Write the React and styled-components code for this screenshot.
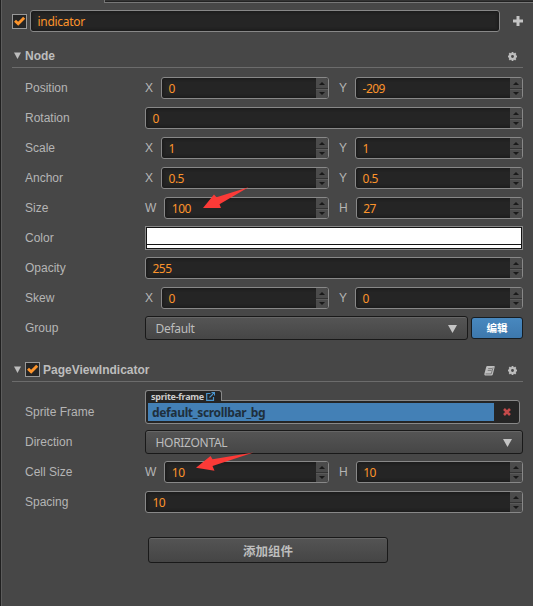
import React from "react";
import styled, { createGlobalStyle, css } from "styled-components";

const GlobalStyle = createGlobalStyle`
  * { box-sizing: border-box; }
  body { margin: 0; background: #474747; overflow: hidden; }
`;

const valueFont = css`
  font-family: "Noto Sans", "Noto Sans CJK SC", sans-serif;
  font-size: 12px;
`;

const Panel = styled.main`
  position: relative;
  width: 533px;
  height: 606px;
  background: #474747;
  border-left: 1px solid #202020;
  box-shadow: inset 1px 0 #5c5c5c;
  color: #b5b5b5;
  font: 12px "Liberation Sans", Arial, sans-serif;
`;

const TabStrip = styled.div`
  height: 3px;
  margin-left: 103px;
  background: #333;
  border-left: 1px solid #777;
  border-bottom: 1px solid #777;
  box-shadow: inset 0 -1px #222;
`;

const NameBar = styled.header`
  display: flex;
  align-items: center;
  height: 22px;
  margin: 7px 10px 0 11px;
`;

const CheckFrame = styled.span`
  display: flex;
  flex: none;
  width: 15px;
  height: 15px;
  margin-right: 3px;
  border: 1px solid #999;
  background: #252525;
`;

const Field = styled.div`
  display: flex;
  flex: 1;
  min-width: 0;
  height: 22px;
  border: 1px solid #888;
  border-radius: 3px;
  background: #252525;
  box-shadow: inset 0 0 3px 1px #191919;
  color: #fd942b;
  overflow: hidden;
`;

const Value = styled.span`
  ${valueFont}
  flex: 1;
  padding-left: 6.5px;
  line-height: 22px;
  letter-spacing: ${(p) => p.$tracking || "-0.5px"};
`;

const Steps = styled.span`
  display: flex;
  flex-direction: column;
  width: 12px;
  background: #4b4b4b;
`;

const Step = styled.span`
  display: flex;
  align-items: center;
  justify-content: center;
  height: 10px;
  & + & {
    border-top: 1px solid #333;
    box-shadow: inset 0 1px #5a5a5a;
  }
`;

const AddButton = styled.span`
  display: flex;
  margin-left: 13px;
`;

const SectionHead = styled.h2`
  display: flex;
  align-items: center;
  height: 24px;
  margin: ${(p) => p.$top}px 10px ${(p) => p.$bottom}px 11px;
  padding: 0 6px 0 2px;
  border-bottom: 1px solid #6c6c6c;
  font-size: 12px;
  font-weight: bold;
  color: #bdbdbd;
`;

const HeadTitle = styled.span`
  flex: 1;
`;

const HeadIcons = styled.span`
  display: flex;
  gap: 13px;
  padding-top: 2px;
`;

const Fold = styled.svg`
  width: 7px;
  height: 7px;
  margin-right: 4px;
`;

const Rows = styled.div`
  display: flex;
  flex-direction: column;
  gap: 8px;
  padding: 0 10px 0 24px;
  width: 532px;
`;

const Row = styled.div`
  display: flex;
  align-items: center;
  height: 22px;
`;

const Label = styled.span`
  flex: none;
  width: 120px;
`;

const Content = styled.div`
  display: flex;
  align-items: center;
  flex: none;
  gap: ${(p) => p.$gap || 0}px;
  width: 378px;
`;

const Axis = styled.div`
  display: flex;
  align-items: center;
  flex: 1;
  gap: 8px;
`;

const Swatch = styled.div`
  flex: 1;
  height: 24px;
  border: 1px solid #888;
  padding: 1px;
  background: #141414;
  display: flex;
  flex-direction: column;
  gap: 1px;
`;

const SwatchFill = styled.span`
  height: ${(p) => p.$h}px;
  background: #fff;
`;

const Select = styled.div`
  ${valueFont}
  display: flex;
  align-items: center;
  justify-content: space-between;
  flex: 1;
  height: 24px;
  padding: 1px 10px 0 9.5px;
  border: 1px solid #191919;
  border-radius: 3px;
  background: linear-gradient(#555, #464646);
  box-shadow: inset 0 1px #666;
  color: #bdbdbd;
  letter-spacing: -0.3px;
`;

const EditButton = styled.button`
  width: 52px;
  height: 22px;
  padding: 0;
  border: 1px solid #171d22;
  border-radius: 3px;
  background: linear-gradient(#4888bf, #3d78ad);
  color: #fff;
  font: bold 10.5px "Noto Sans CJK SC", sans-serif;
  line-height: 18px;
`;

const AssetSlot = styled.div`
  display: flex;
  flex-direction: column;
  width: 375px;
  height: 34px;
  margin-top: -10px;
`;

const AssetTab = styled.div`
  ${valueFont}
  position: relative;
  display: flex;
  align-items: center;
  gap: 2px;
  width: 77px;
  height: 11px;
  padding-left: 5px;
  border: 1px solid #888;
  border-bottom: 0;
  border-radius: 3px 3px 0 0;
  background: #252525;
  color: #ccc;
  font-size: 9px;
  font-weight: bold;
  letter-spacing: -0.25px;
`;

const AssetBox = styled.div`
  display: flex;
  height: 24px;
  margin-top: -1px;
  padding: 2px;
  border: 1px solid #888;
  border-radius: 0 3px 3px 3px;
  background: #252525;
`;

const AssetName = styled.span`
  ${valueFont}
  width: 346px;
  height: 18px;
  padding-left: 4px;
  background: #4380b6;
  color: #1e2f3d;
  font-weight: bold;
  line-height: 19px;
  letter-spacing: -0.35px;
`;

const ClearIcon = styled.span`
  display: flex;
  flex: 1;
  align-items: center;
  justify-content: center;
  padding-left: 2px;
`;

const AddComponent = styled.button`
  display: block;
  width: 240px;
  height: 26px;
  margin: 24px 0 0 147px;
  padding: 0;
  border: 1px solid #191919;
  border-radius: 3px;
  background: linear-gradient(#545454, #454545);
  box-shadow: inset 0 1px #666;
  color: #bdbdbd;
  font: bold 12.5px "Noto Sans CJK SC", sans-serif;
`;

const Pointers = styled.svg`
  position: absolute;
  top: 0;
  left: -1px;
  width: 533px;
  height: 606px;
  pointer-events: none;
`;

const Check = () => (
  <CheckFrame>
    <svg width="13" height="13" viewBox="0 0 13 13">
      <path d="M2 5.8 5.2 8.8 11.2 2.7" fill="none" stroke="#fd942b" strokeWidth="2.9" />
    </svg>
  </CheckFrame>
);

const Gear = () => (
  <svg width="9" height="9" viewBox="0 0 10 10">
    <g stroke="#bdbdbd" fill="none">
      <path d="M5 0v10M0 5h10M1.4 1.4l7.2 7.2M8.6 1.4L1.4 8.6" strokeWidth="2" />
      <circle cx="5" cy="5" r="2.8" strokeWidth="2.4" fill="#474747" />
    </g>
  </svg>
);

const Book = () => (
  <svg width="11" height="10" viewBox="0 0 11 10">
    <path d="M3.3 0H10q1 0 .7 1L8.8 8.5Q8.5 9.5 7.5 9.5H1.2Q0 9.2.4 7.8L2.2.9Q2.4 0 3.3 0Z" fill="#bdbdbd" />
    <path d="M4.2 2.6h3.8M3.7 4.4h3.8M1.6 7.9h5.6l1.9-6.4" fill="none" stroke="#5c5c5c" strokeWidth=".7" />
  </svg>
);

const Down = () => (
  <svg width="9" height="8" viewBox="0 0 8 7">
    <path d="M0 0h8L4 7z" fill="#c4c4c4" />
  </svg>
);

const Num = ({ children }) => (
  <Field>
    <Value>{children}</Value>
    <Steps>
      <Step>
        <svg width="6" height="3"><path d="M0 3 3 0 6 3z" fill="#191919" /></svg>
      </Step>
      <Step>
        <svg width="6" height="3"><path d="M0 0h6L3 3z" fill="#191919" /></svg>
      </Step>
    </Steps>
  </Field>
);

const Prop = ({ label, gap, children }) => (
  <Row>
    <Label>{label}</Label>
    <Content $gap={gap}>{children}</Content>
  </Row>
);

const Pair = ({ label, names = ["X", "Y"], values }) => (
  <Prop label={label} gap={10}>
    {names.map((n, i) => (
      <Axis key={n}>{n}<Num>{values[i]}</Num></Axis>
    ))}
  </Prop>
);

const FoldArrow = () => (
  <Fold viewBox="0 0 7 7"><path d="M0 .5h7L3.5 7z" fill="#bdbdbd" /></Fold>
);

export default function App() {
  return (
    <>
      <GlobalStyle />
      <Panel>
        <TabStrip />
        <NameBar>
          <Check />
          <Field><Value $tracking="-0.3px">indicator</Value></Field>
          <AddButton>
            <svg width="10" height="10"><path d="M5 0v10M0 5h10" stroke="#c4c4c4" strokeWidth="3" /></svg>
          </AddButton>
        </NameBar>

        <SectionHead $top={12} $bottom={9}>
          <FoldArrow />
          <HeadTitle>Node</HeadTitle>
          <HeadIcons><Gear /></HeadIcons>
        </SectionHead>
        <Rows>
          <Pair label="Position" values={["0", "-209"]} />
          <Prop label="Rotation"><Num>0</Num></Prop>
          <Pair label="Scale" values={["1", "1"]} />
          <Pair label="Anchor" values={["0.5", "0.5"]} />
          <Pair label="Size" names={["W", "H"]} values={["100", "27"]} />
          <Prop label="Color">
            <Swatch><SwatchFill $h={16} /><SwatchFill $h={3} /></Swatch>
          </Prop>
          <Prop label="Opacity"><Num>255</Num></Prop>
          <Pair label="Skew" values={["0", "0"]} />
          <Prop label="Group" gap={3}>
            <Select>Default<Down /></Select>
            <EditButton>编辑</EditButton>
          </Prop>
        </Rows>

        <SectionHead $top={19} $bottom={19}>
          <FoldArrow />
          <Check />
          <HeadTitle>PageViewIndicator</HeadTitle>
          <HeadIcons><Book /><Gear /></HeadIcons>
        </SectionHead>
        <Rows>
          <Prop label="Sprite Frame">
            <AssetSlot>
              <AssetTab>
                sprite-frame
                <svg width="9" height="9" viewBox="0 0 9 9" fill="none" stroke="#4a94cc">
                  <path d="M4.5 1.5H.7v6.8h6.8V5M5.5.6h3v3M8.2.9 3.5 5.5" strokeWidth="1.2" />
                </svg>
              </AssetTab>
              <AssetBox>
                <AssetName>default_scrollbar_bg</AssetName>
                <ClearIcon>
                  <svg width="8" height="8"><path d="m1 1 6 6M7 1 1 7" stroke="#c44a4a" strokeWidth="2.6" /></svg>
                </ClearIcon>
              </AssetBox>
            </AssetSlot>
          </Prop>
          <Prop label="Direction"><Select>HORIZONTAL<Down /></Select></Prop>
          <Pair label="Cell Size" names={["W", "H"]} values={["10", "10"]} />
          <Prop label="Spacing"><Num>10</Num></Prop>
        </Rows>
        <AddComponent>添加组件</AddComponent>

        <Pointers viewBox="0 0 533 606" fill="#fc3a37">
          <path d="M203 208 214 194.5 216.5 197.3 248.5 187.2 219.5 204.3 221 208Z" />
          <path d="M196 467.7 210.5 456 212.5 459.3 253.5 452.5 212.5 466 214.5 470.7Z" />
        </Pointers>
      </Panel>
    </>
  );
}
